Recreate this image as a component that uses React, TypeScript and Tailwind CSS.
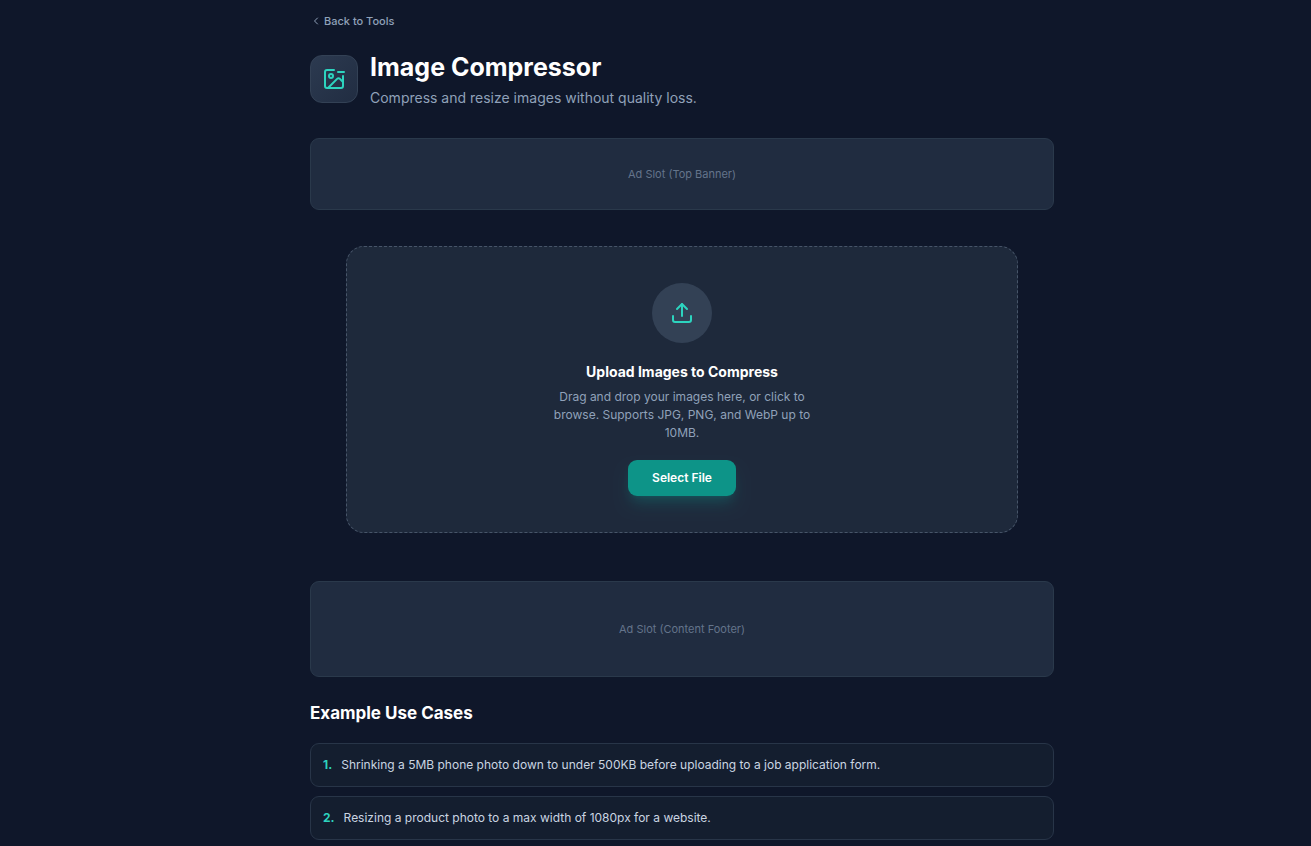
import { ChevronLeft, ImageMinus, Upload } from "lucide-react";

const USE_CASES = [
  "Shrinking a 5MB phone photo down to under 500KB before uploading to a job application form.",
  "Resizing a product photo to a max width of 1080px for a website.",
];

function AdSlot({ label, className }: { label: string; className: string }) {
  return (
    <div
      className={`flex items-center justify-center rounded-[9px] border border-[#2a394b] bg-[#202c40] text-[11px] text-[#64748b] ${className}`}
    >
      {label}
    </div>
  );
}

export default function App() {
  return (
    <div className="min-h-screen bg-[#0f172a] pl-[53px] font-['Inter',sans-serif] text-slate-300">
      <main className="mx-auto max-w-[744px] pb-[6px] pt-[13px]">
        <a href="#tools" className="inline-flex h-4 items-center gap-0.5 align-top text-[11px] font-medium text-slate-400">
          <ChevronLeft className="size-3" aria-hidden="true" />
          Back to Tools
        </a>

        {/* Header */}
        <header className="mt-[13px] flex items-center gap-3">
          <div className="flex size-12 shrink-0 items-center justify-center rounded-xl border border-[#334155] bg-linear-to-br from-[#2c3a50] to-[#212d42] text-[#2dd4bf]">
            <ImageMinus className="size-6" aria-hidden="true" />
          </div>
          <div>
            <h1 className="text-[25px] font-bold leading-[34px] text-white">Image Compressor</h1>
            <p className="mt-1 text-[14px] leading-5 text-slate-400">
              Compress and resize images without quality loss.
            </p>
          </div>
        </header>

        <AdSlot label="Ad Slot (Top Banner)" className="mt-[30px] h-[72px]" />

        {/* Drop zone */}
        <section className="mx-9 mt-9 flex flex-col items-center rounded-[18px] border border-dashed border-[#475569] bg-[#1e293b] py-9 text-center">
          <div className="flex size-[60px] items-center justify-center rounded-full bg-[#334155] text-[#2dd4bf]">
            <Upload className="size-6" aria-hidden="true" />
          </div>
          <h2 className="mt-[18px] text-[14px] font-bold leading-[21px] text-white">Upload Images to Compress</h2>
          <p className="mt-[6px] max-w-[288px] text-[12px] leading-[18px] text-slate-400">
            Drag and drop your images here, or click to browse. Supports JPG, PNG, and WebP up to 10MB.
          </p>
          <button
            type="button"
            className="mt-[18px] h-9 rounded-[9px] bg-[#0d9488] px-6 text-[12px] font-semibold text-white shadow-lg shadow-teal-500/20"
          >
            Select File
          </button>
        </section>

        <AdSlot label="Ad Slot (Content Footer)" className="mt-12 h-24" />

        {/* Use cases */}
        <section className="mt-6">
          <h2 className="text-[17px] font-bold leading-6 text-white">Example Use Cases</h2>
          <ol className="mt-[18px] space-y-[9px]">
            {USE_CASES.map((text, i) => (
              <li
                key={text}
                className="flex h-11 items-center gap-[9px] rounded-[9px] border border-[#283548] bg-[#141e2f] px-3 text-[12px]"
              >
                <span className="font-bold text-[#2dd4bf]">{i + 1}.</span>
                <span>{text}</span>
              </li>
            ))}
          </ol>
        </section>
      </main>
    </div>
  );
}
